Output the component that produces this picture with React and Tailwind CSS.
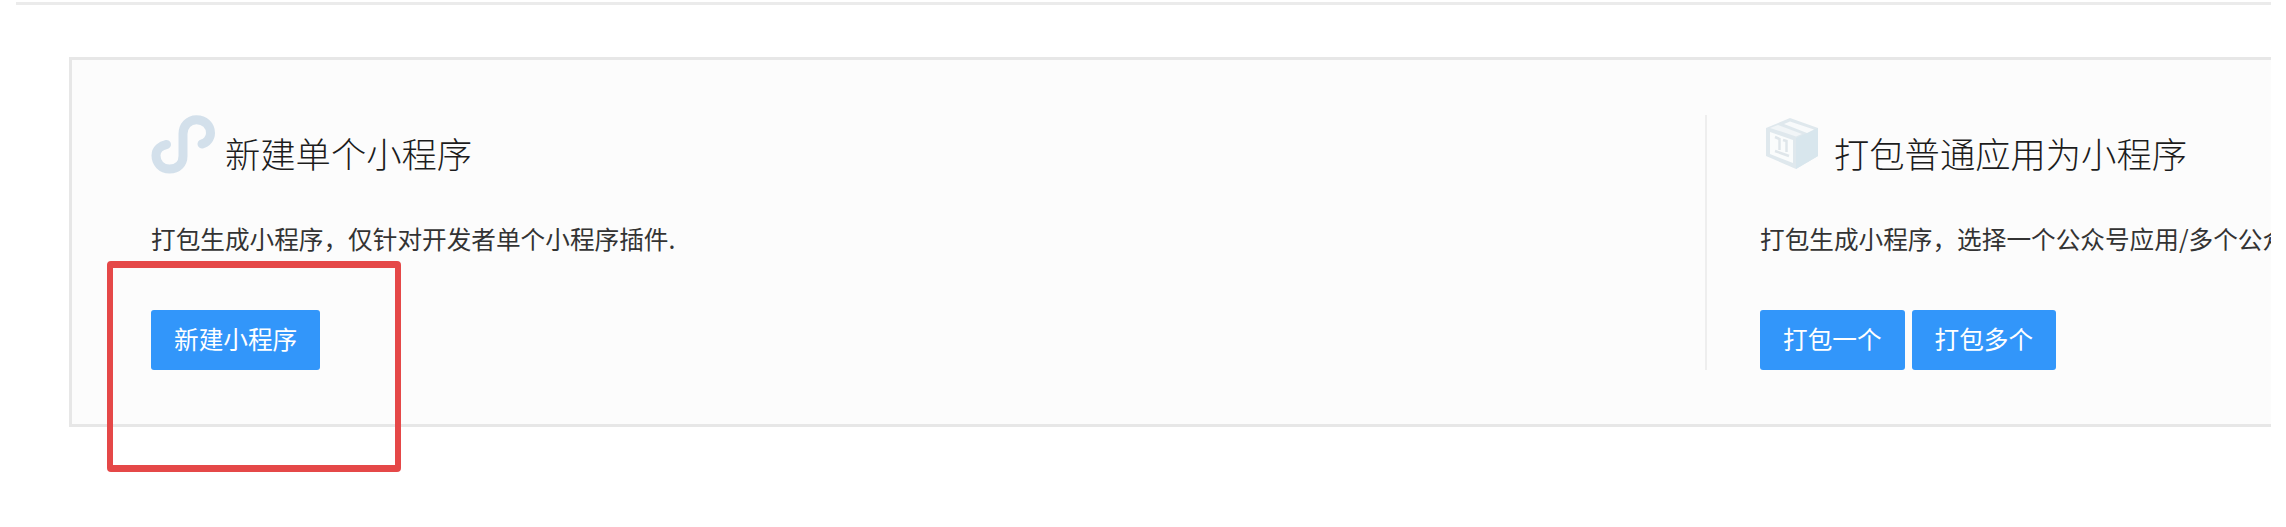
import React from 'react';

const MiniProgramIcon = () => (
  <svg className="w-16 h-[60px] shrink-0" viewBox="0 0 64 60" fill="none">
    <path
      d="M15.500 29.500C10 30.500 5 34 5 40.500C5 48 10.500 54 18.500 54C27 54 32 48.500 32 41V19C32 11 37.500 4.700 45.500 4.700C53.500 4.700 59.500 10.500 59.500 18C59.500 23.500 55.500 28 51 29"
      stroke="#d3e0eb"
      strokeWidth="9"
      strokeLinecap="round"
    />
  </svg>
);

const BoxIcon = () => (
  <svg className="w-[54px] h-[54px] shrink-0" viewBox="0 0 54 54" fill="none">
    <path d="M25 0L53 10V38L31 51L1 38V10Z" fill="#dfe8ed" />
    <path d="M31 20L53 10V38L31 51Z" fill="#d8e6ed" />
    <path d="M19 6L25 3.500L49 11.500L42 15Z" fill="#f8fafb" />
    <path d="M5 10L13 7L37 16L31 18.500Z" fill="#f1f5f7" />
    <path d="M5 14L28 22V45L5 36Z" fill="#fafcfc" />
    <path d="M10 19L14.500 21V32M18 22L21.500 23V34M10 33L24 38" stroke="#dfe6ea" strokeWidth="2.500" />
  </svg>
);

function Button({ children }) {
  return (
    <button className="h-[60px] px-[23px] pb-[3px] rounded-[3px] bg-[#3296fa] text-white text-[24.650px] leading-[57px] whitespace-nowrap">
      {children}
    </button>
  );
}

function Entry({ icon, title, description, actions }) {
  return (
    <section className="flex flex-col items-start h-[255px]">
      <div className="flex items-start h-[60px]">
        {icon}
        <h2 className="pt-[13px] text-[35.300px] font-light text-[#1c1c1c] leading-[50px] whitespace-nowrap">{title}</h2>
      </div>
      <p className="mt-[45px] text-[24.650px] leading-[36px] whitespace-nowrap">{description}</p>
      <div className="flex gap-[7px] mt-[54px]">
        {actions.map((label) => (
          <Button key={label}>{label}</Button>
        ))}
      </div>
    </section>
  );
}

export default function App() {
  return (
    <div className="relative w-[2286px] h-[527px] overflow-hidden bg-white text-[#333] font-['Noto_Sans_CJK_SC',sans-serif]">
      <div className="ml-4 w-[2255px] h-full pt-[2px] overflow-hidden">
        <div className="h-[3px] bg-[#ebebeb]" />
        <main className="flex mt-[52px] ml-[53px] w-[2202px] h-[370px] pt-[55px] pl-[79px] overflow-hidden border-[3px] border-r-0 border-[#e7e7e7] bg-[#fcfcfc]">
          <div className="w-[1556px] shrink-0 border-r-2 border-[#eeeeee] h-[255px]">
            <Entry
              icon={<div className="w-[74px]"><MiniProgramIcon /></div>}
              title="新建单个小程序"
              description="打包生成小程序，仅针对开发者单个小程序插件."
              actions={['新建小程序']}
            />
          </div>
          <div className="pl-[53px]">
            <Entry
              icon={<div className="w-[74px] pt-[3px] pl-[5px]"><BoxIcon /></div>}
              title="打包普通应用为小程序"
              description="打包生成小程序，选择一个公众号应用/多个公众"
              actions={['打包一个', '打包多个']}
            />
          </div>
        </main>
      </div>
      {/* highlight around the create button */}
      <div className="absolute left-[107px] top-[261px] w-[294px] h-[211px] border-x-[6px] border-y-[7px] border-[#e54848] rounded-[4px]" />
    </div>
  );
}
